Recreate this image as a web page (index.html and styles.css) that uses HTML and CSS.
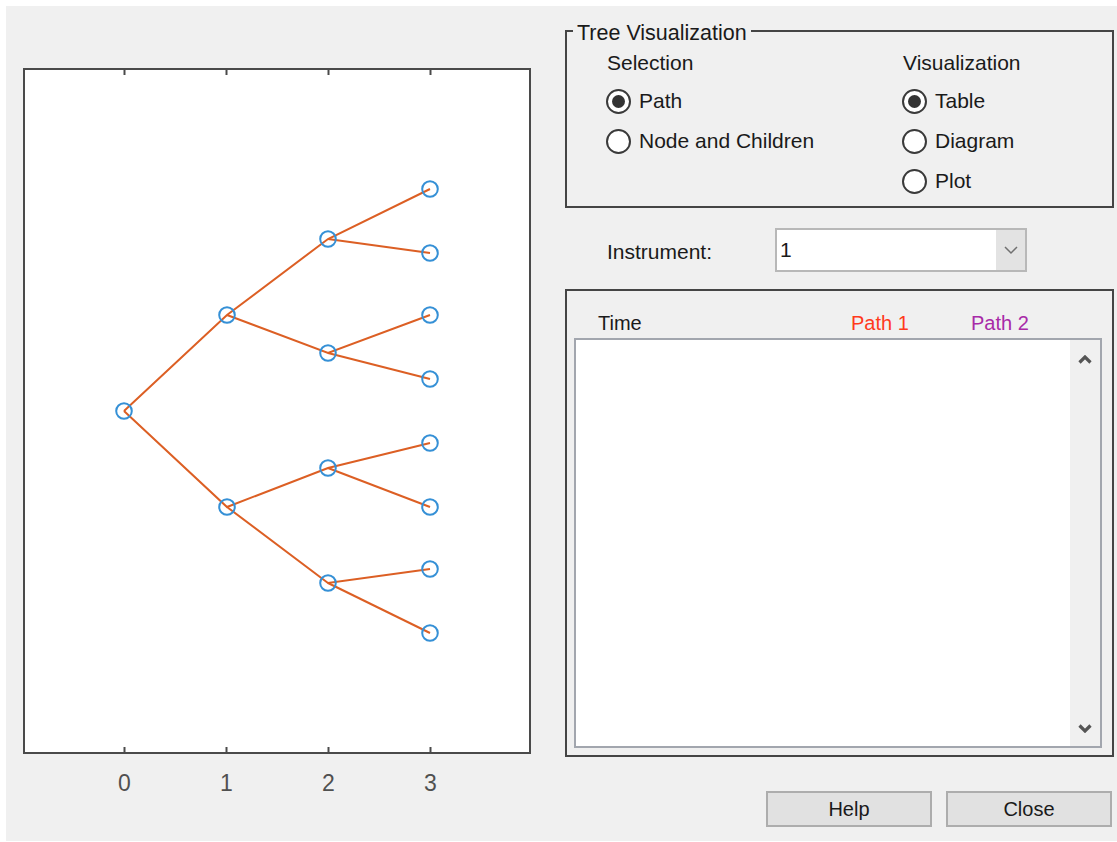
FILE: index.html
```html
<!DOCTYPE html>
<html>
<head>
<meta charset="utf-8">
<title>Tree Visualization</title>
<link rel="stylesheet" href="styles.css">
</head>
<body>
<div class="window">
  <div class="plot-col">
    <svg class="plot" width="559" height="835" viewBox="6 6 559 835" xmlns="http://www.w3.org/2000/svg">
      <rect x="24" y="69" width="506" height="684" fill="#fff" stroke="#4a4a4a" stroke-width="2"/>
      <g stroke="#4a4a4a" stroke-width="2">
        <line x1="124.5" y1="69" x2="124.5" y2="75"/>
        <line x1="226.5" y1="69" x2="226.5" y2="75"/>
        <line x1="328.5" y1="69" x2="328.5" y2="75"/>
        <line x1="430.5" y1="69" x2="430.5" y2="75"/>
        <line x1="124.5" y1="747" x2="124.5" y2="753"/>
        <line x1="226.5" y1="747" x2="226.5" y2="753"/>
        <line x1="328.5" y1="747" x2="328.5" y2="753"/>
        <line x1="430.5" y1="747" x2="430.5" y2="753"/>
      </g>
      <g class="ticklabels" font-family="Liberation Sans, Arial, sans-serif" font-size="23" fill="#505050" text-anchor="middle">
        <text x="124.5" y="791">0</text>
        <text x="226.5" y="791">1</text>
        <text x="328.5" y="791">2</text>
        <text x="430.5" y="791">3</text>
      </g>
      <g stroke="#dc5f24" stroke-width="2" fill="none">
        <polyline points="124,411 227,315 328,239 430,189"/>
        <line x1="328" y1="239" x2="430" y2="253"/>
        <polyline points="227,315 328,353 430,315"/>
        <line x1="328" y1="353" x2="430" y2="379"/>
        <polyline points="124,411 227,507 328,468 430,443"/>
        <line x1="328" y1="468" x2="430" y2="507"/>
        <polyline points="227,507 328,583 430,569"/>
        <line x1="328" y1="583" x2="430" y2="633"/>
      </g>
      <g stroke="#3590d6" stroke-width="2" fill="none">
        <circle cx="124" cy="411" r="7.8"/>
        <circle cx="227" cy="315" r="7.8"/>
        <circle cx="227" cy="507" r="7.8"/>
        <circle cx="328" cy="239" r="7.8"/>
        <circle cx="328" cy="353" r="7.8"/>
        <circle cx="328" cy="468" r="7.8"/>
        <circle cx="328" cy="583" r="7.8"/>
        <circle cx="430" cy="189" r="7.8"/>
        <circle cx="430" cy="253" r="7.8"/>
        <circle cx="430" cy="315" r="7.8"/>
        <circle cx="430" cy="379" r="7.8"/>
        <circle cx="430" cy="443" r="7.8"/>
        <circle cx="430" cy="507" r="7.8"/>
        <circle cx="430" cy="569" r="7.8"/>
        <circle cx="430" cy="633" r="7.8"/>
      </g>
    </svg>
  </div>
  <div class="side">
    <fieldset class="tree-group">
      <legend class="legend">Tree Visualization</legend>
      <div class="cols">
        <div class="col col-sel">
          <div class="hdr">Selection</div>
          <div class="radio"><span class="dot on"></span><span class="rlabel">Path</span></div>
          <div class="radio"><span class="dot"></span><span class="rlabel">Node and Children</span></div>
        </div>
        <div class="col col-vis">
          <div class="hdr">Visualization</div>
          <div class="radio"><span class="dot on"></span><span class="rlabel">Table</span></div>
          <div class="radio"><span class="dot"></span><span class="rlabel">Diagram</span></div>
          <div class="radio"><span class="dot"></span><span class="rlabel">Plot</span></div>
        </div>
      </div>
    </fieldset>
    <div class="instrument-row">
      <span class="ilabel">Instrument:</span>
      <div class="combo">
        <span class="cval">1</span>
        <span class="cdrop">
          <svg width="14" height="9" viewBox="0 0 14 9"><polyline points="1,1 7,7 13,1" fill="none" stroke="#707070" stroke-width="1.5"/></svg>
        </span>
      </div>
    </div>
    <div class="table-panel">
      <div class="thead">
        <span class="th th-time">Time</span>
        <span class="th th-p1">Path 1</span>
        <span class="th th-p2">Path 2</span>
      </div>
      <div class="listbox">
        <div class="list-body"></div>
        <div class="scrollbar">
          <svg width="14" height="9" viewBox="0 0 14 9"><polyline points="1.5,7.5 7,2 12.5,7.5" fill="none" stroke="#555555" stroke-width="3.2"/></svg>
          <svg width="14" height="9" viewBox="0 0 14 9"><polyline points="1.5,1.5 7,7 12.5,1.5" fill="none" stroke="#555555" stroke-width="3.2"/></svg>
        </div>
      </div>
    </div>
    <div class="buttons">
      <button class="btn">Help</button>
      <button class="btn">Close</button>
    </div>
  </div>
</div>
</body>
</html>
```

FILE: styles.css
```css
html, body {
  margin: 0;
  padding: 0;
  background: #ffffff;
}

.window {
  margin: 6px 0 0 6px;
  width: 1111px;
  height: 835px;
  background: #f0f0f0;
  display: flex;
  font-family: "Liberation Sans", Arial, sans-serif;
  font-size: 21px;
  color: #1a1a1a;
}

.plot-col {
  width: 559px;
  flex: none;
}

.plot {
  display: block;
}

.side {
  width: 552px;
  flex: none;
  display: flex;
  flex-direction: column;
}

/* Tree Visualization group */
.tree-group {
  margin: 10px 0 0 0;
  padding: 6px 0 5px 0;
  width: 549px;
  box-sizing: border-box;
  border: 2px solid #454545;
  min-inline-size: 0;
}

.legend {
  margin-left: 6px;
  padding: 5px 4px 0 4px;
  font-size: 21.5px;
  line-height: 24px;
  color: #1a1a1a;
}

.cols {
  display: flex;
  padding-left: 39px;
}

.col {
  display: flex;
  flex-direction: column;
}

.col-sel {
  width: 296px;
}

.hdr {
  height: 24px;
  line-height: 24px;
  margin-bottom: 6px;
  padding-left: 1px;
}

.radio {
  height: 40px;
  display: flex;
  align-items: center;
  gap: 8px;
}

.dot {
  width: 25px;
  height: 25px;
  box-sizing: border-box;
  border: 2px solid #3a3a3a;
  border-radius: 50%;
  background: #ffffff;
  display: flex;
  align-items: center;
  justify-content: center;
  flex: none;
}

.dot.on::after {
  content: "";
  width: 13px;
  height: 13px;
  border-radius: 50%;
  background: #333333;
}

.rlabel {
  line-height: 24px;
}

/* Instrument row */
.instrument-row {
  margin-top: 20px;
  height: 44px;
  display: flex;
  align-items: center;
  padding-left: 42px;
}

.ilabel {
  width: 168px;
  flex: none;
  padding-top: 3px;
}

.combo {
  width: 252px;
  height: 44px;
  box-sizing: border-box;
  border: 2px solid #b8b8b8;
  background: #ffffff;
  display: flex;
  align-items: stretch;
}

.cval {
  flex: 1;
  padding-left: 3px;
  display: flex;
  align-items: center;
}

.cdrop {
  width: 29px;
  background: #e3e3e3;
  display: flex;
  align-items: center;
  justify-content: center;
}

/* Table panel */
.table-panel {
  margin-top: 17px;
  width: 549px;
  height: 468px;
  box-sizing: border-box;
  border: 2px solid #454545;
  padding: 20px 0 7px 7px;
  display: flex;
  flex-direction: column;
}

.thead {
  height: 24px;
  line-height: 24px;
  margin-bottom: 3px;
  display: flex;
  font-size: 20px;
}

.th-time {
  margin-left: 24px;
  width: 253px;
  color: #1a1a1a;
}

.th-p1 {
  width: 120px;
  color: #ff3a1c;
}

.th-p2 {
  color: #a82aa8;
}

.listbox {
  width: 528px;
  height: 410px;
  box-sizing: border-box;
  border: 2px solid #a2a6ae;
  display: flex;
}

.list-body {
  flex: 1;
  background: #ffffff;
}

.scrollbar {
  width: 30px;
  background: #f0f0f0;
  display: flex;
  flex-direction: column;
  align-items: center;
  justify-content: space-between;
  padding: 15px 0 13px 0;
}

.scrollbar svg {
  display: block;
}

/* Buttons */
.buttons {
  margin-top: 34px;
  padding-left: 201px;
  display: flex;
  gap: 14px;
}

.btn {
  width: 166px;
  height: 36px;
  box-sizing: border-box;
  border: 2px solid #adadad;
  background: #e1e1e1;
  font-family: "Liberation Sans", Arial, sans-serif;
  font-size: 20px;
  color: #1a1a1a;
  padding: 0;
  margin: 0;
}
```
